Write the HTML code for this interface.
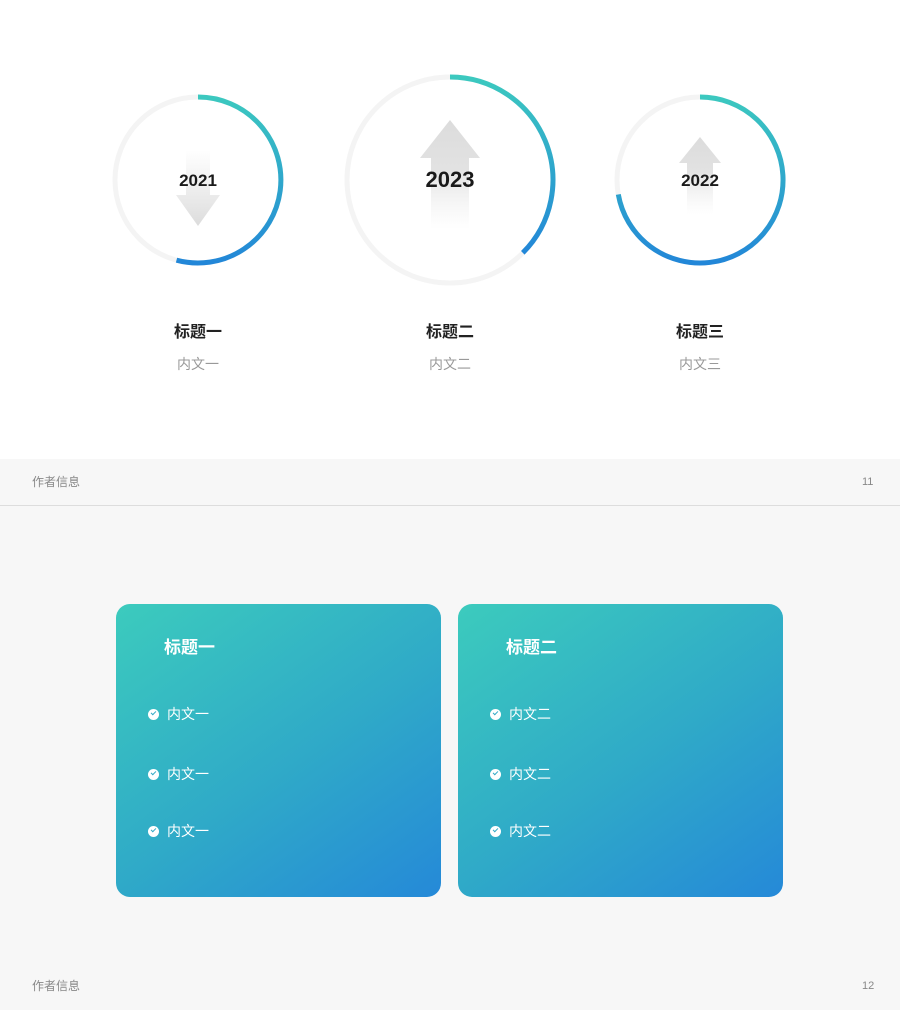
<!DOCTYPE html>
<html><head><meta charset="utf-8"><style>
body{margin:0;width:900px;height:1010px;position:relative;background:#fff;font-family:"Liberation Sans","Noto Sans CJK SC",sans-serif;overflow:hidden}
.a{position:absolute}
.t{position:absolute;width:200px;text-align:center;font-weight:bold;font-size:16px;color:#222;top:318px}
.s{position:absolute;width:200px;text-align:center;font-size:14px;color:#999;top:354px}
.card{position:absolute;top:604px;width:325px;height:293px;border-radius:14px;background:linear-gradient(145deg,#3ccbbd 0%,#2fa9c8 55%,#2589d8 100%);color:#fff}
.card h3{position:absolute;left:48px;top:29px;margin:0;font-size:17px}
.it{position:absolute;left:32px;font-size:14px;display:flex;align-items:center}
.it i{display:inline-block;width:11px;height:11px;border-radius:50%;background:#fff;margin-right:8px;position:relative}
.it i:after{content:"";position:absolute;left:3px;top:2.5px;width:4px;height:2px;border-left:1.5px solid #33aac6;border-bottom:1.5px solid #33aac6;transform:rotate(-45deg)}
</style></head><body>
<svg class="a" style="left:0;top:0" width="900" height="300">
<defs>
<linearGradient id="g1" gradientUnits="userSpaceOnUse" x1="0" y1="95" x2="0" y2="265"><stop offset="0" stop-color="#3cc9bf"/><stop offset="1" stop-color="#2286d8"/></linearGradient>
<linearGradient id="g2" gradientUnits="userSpaceOnUse" x1="0" y1="77" x2="0" y2="255"><stop offset="0" stop-color="#3cc9bf"/><stop offset="1" stop-color="#2286d8"/></linearGradient>
<linearGradient id="ad" x1="0" y1="0" x2="0" y2="1"><stop offset="0" stop-color="#e0e0e0" stop-opacity="0"/><stop offset="1" stop-color="#dcdcdc"/></linearGradient>
<linearGradient id="au" x1="0" y1="0" x2="0" y2="1"><stop offset="0" stop-color="#dcdcdc"/><stop offset="0.45" stop-color="#e2e2e2"/><stop offset="1" stop-color="#f0f0f0" stop-opacity="0"/></linearGradient>
</defs>
<circle cx="198" cy="180" r="83" fill="none" stroke="#f4f4f4" stroke-width="5"/>
<circle cx="450" cy="180" r="103" fill="none" stroke="#f4f4f4" stroke-width="5"/>
<circle cx="700" cy="180" r="83" fill="none" stroke="#f4f4f4" stroke-width="5"/>
<path d="M186 150h24v45h10l-22 31-22-31h10z" fill="url(#ad)"/>
<path d="M450 120l30 38h-11v72h-38v-72h-11z" fill="url(#au)"/>
<path d="M700 137l21 26h-8v52h-26v-52h-8z" fill="url(#au)"/>
<path d="M198 97A83 83 0 1 1 176.5 260.2" fill="none" stroke="url(#g1)" stroke-width="5"/>
<path d="M450 77A103 103 0 0 1 522.8 252.8" fill="none" stroke="url(#g2)" stroke-width="5"/>
<path d="M700 97A83 83 0 1 1 618.3 194.4" fill="none" stroke="url(#g1)" stroke-width="5"/>
<text x="198" y="186" text-anchor="middle" font-family="Liberation Sans,sans-serif" font-weight="bold" font-size="17" fill="#1a1a1a">2021</text>
<text x="450" y="187" text-anchor="middle" font-family="Liberation Sans,sans-serif" font-weight="bold" font-size="22" fill="#1a1a1a">2023</text>
<text x="700" y="186" text-anchor="middle" font-family="Liberation Sans,sans-serif" font-weight="bold" font-size="17" fill="#1a1a1a">2022</text>
</svg>
<div class="t" style="left:98px">标题一</div><div class="s" style="left:98px">内文一</div>
<div class="t" style="left:350px">标题二</div><div class="s" style="left:350px">内文二</div>
<div class="t" style="left:600px">标题三</div><div class="s" style="left:600px">内文三</div>
<div class="a" style="left:0;top:459px;width:900px;height:46px;background:#f7f7f7;border-bottom:1px solid #ddd"></div>
<div class="a" style="left:32px;top:473px;font-size:12px;color:#888">作者信息</div>
<div class="a" style="left:862px;top:476px;font-size:11px;color:#888">11</div>
<div class="a" style="left:0;top:506px;width:900px;height:504px;background:#f7f7f7"></div>
<div class="card" style="left:116px"><h3>标题一</h3>
<div class="it" style="top:100px"><i></i>内文一</div><div class="it" style="top:160px"><i></i>内文一</div><div class="it" style="top:217px"><i></i>内文一</div></div>
<div class="card" style="left:458px"><h3>标题二</h3>
<div class="it" style="top:100px"><i></i>内文二</div><div class="it" style="top:160px"><i></i>内文二</div><div class="it" style="top:217px"><i></i>内文二</div></div>
<div class="a" style="left:32px;top:977px;font-size:12px;color:#888">作者信息</div>
<div class="a" style="left:862px;top:980px;font-size:11px;color:#888">12</div>
</body></html>
